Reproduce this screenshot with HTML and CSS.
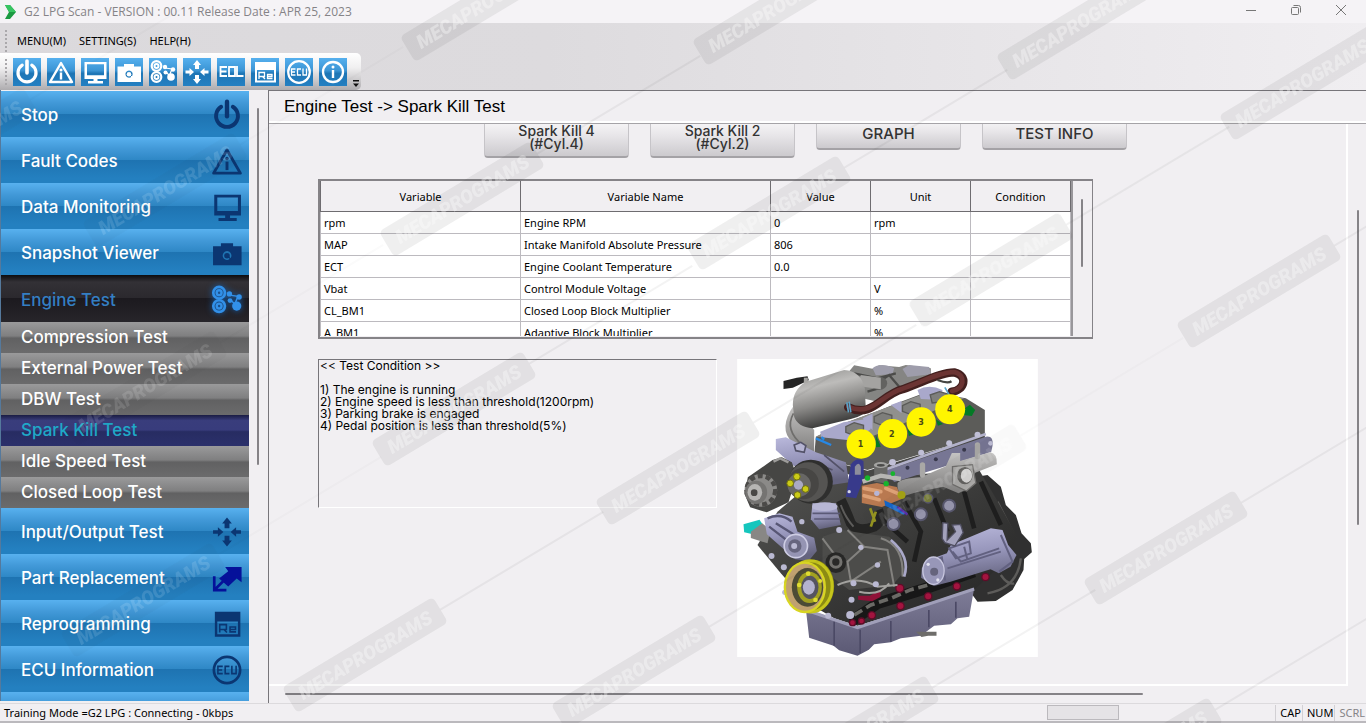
FILE: index.html
```html
<!DOCTYPE html>
<html lang="en">
<head>
<meta charset="utf-8">
<title>G2 LPG Scan</title>
<link rel="stylesheet" href="styles.css">
</head>
<body>
<svg class="sprite" aria-hidden="true">
  <symbol id="i-power" viewBox="0 0 28 28"><path d="M9.2 7.2A9 9 0 1 0 18.8 7.2" fill="none" stroke="currentColor" stroke-width="3.2" stroke-linecap="round"/><path d="M14 3v12" stroke="currentColor" stroke-width="3.6" stroke-linecap="round"/></symbol>
  <symbol id="i-warn" viewBox="0 0 28 28"><path d="M14 5 25 24H3Z" fill="none" stroke="currentColor" stroke-width="2.4" stroke-linejoin="round"/><circle cx="14" cy="12" r="1.500" fill="currentColor"/><path d="M12.800 14.500h2.400v7h-2.400z" fill="currentColor"/></symbol>
  <symbol id="i-monitor" viewBox="0 0 28 28"><path fill-rule="evenodd" d="M3.500 4h22v17h-9v2h5.500v2.500H7V23h5.500v-2h-9zM6 6.200h17v11H6z" fill="currentColor"/></symbol>
  <symbol id="i-camera" viewBox="0 0 28 28"><path fill-rule="evenodd" d="M2.500 8.500H9V6h10v2.500h7v15.500H2.500zM14 12.500a3.600 3.600 0 1 0 .1 0z" fill="currentColor"/><circle cx="14" cy="16.200" r="2.300" fill="currentColor"/><path d="m15 17 3 3" stroke="currentColor"/></symbol>
  <symbol id="i-engine" viewBox="0 0 28 28"><g fill="none" stroke="currentColor"><circle cx="7.500" cy="8" r="4.800" stroke-width="2.200"/><circle cx="7.500" cy="8" r="2" stroke-width="2"/><circle cx="7.500" cy="19" r="4.800" stroke-width="2.200"/><circle cx="7.500" cy="19" r="2" stroke-width="2"/><path d="m16 10 7 1-2 5M17 14l4 4" stroke-width="1.200"/></g><g fill="currentColor"><circle cx="16" cy="9" r="2.200"/><circle cx="16.500" cy="14.500" r="2"/><circle cx="24" cy="11.500" r="2.200"/><circle cx="22" cy="19" r="3.800"/></g></symbol>
  <symbol id="i-move" viewBox="0 0 28 28"><path fill="currentColor" d="m14 2 4 5H16v4h-4V7h-2zM14 26l4-5H16v-4h-4v4h-2zM11 14l-4.500-4v2.500h-4v3h4V18zM17 14l4.500-4v2.500h4v3h-4V18z"/></symbol>
  <symbol id="i-eol" viewBox="0 0 28 28"><path fill="none" stroke="currentColor" stroke-width="1.800" d="M10 9H3.500v9H10M4 13.500h5.500M12 9h6v9h-6zM20 8v10h6.500"/></symbol>
  <symbol id="i-re" viewBox="0 0 28 28"><path fill-rule="evenodd" d="M4 4h21v20.500H4zM6 12h17v10.500H6z" fill="currentColor"/><path fill="none" stroke="currentColor" stroke-width="1.300" d="M8 21v-6.500h5.500v4H8m3.500 0L14 21M16.500 18.500H21v-2h-4.500V20.500H21.500"/></symbol>
  <symbol id="i-ecu" viewBox="0 0 28 28"><circle cx="14" cy="14" r="10.800" fill="none" stroke="currentColor" stroke-width="2.200"/><path fill="none" stroke="currentColor" stroke-width="1.300" d="M10.500 11H6.500v6h4M7 14h3M16 11h-3.500v6H16M18 10.500V17h3.500v-6.500"/></symbol>
  <symbol id="i-info" viewBox="0 0 28 28"><circle cx="14" cy="14" r="10" fill="none" stroke="currentColor" stroke-width="2.300"/><circle cx="14" cy="9" r="1.500" fill="currentColor"/><path d="M12.800 12h2.400v8h-2.400z" fill="currentColor"/></symbol>
  <symbol id="i-swap" viewBox="0 0 28 28"><path fill="currentColor" d="M12.500 5H26v12.500l-4-3-7 6.500-7.500-6.500 7.500-6z"/><path fill="none" stroke="currentColor" stroke-width="2.200" d="M3.500 12.500V24H13.500M4 23.500l9-9"/></symbol>
</svg>

<header class="titlebar">
  <svg class="logo" viewBox="0 0 12 16" aria-hidden="true"><path d="M1 1h5l6 7-6 7H1l4-7z" fill="#1c9a42"/><path d="M1 1h5l6 7H5z" fill="#37c462"/></svg>
  <h1 class="title">G2 LPG Scan - VERSION : 00.11 Release Date : APR 25, 2023</h1>
  <div class="window-buttons">
    <button type="button" aria-label="Minimize"><svg viewBox="0 0 12 12"><path d="M1 6.500h10"/></svg></button>
    <button type="button" aria-label="Restore"><svg viewBox="0 0 12 12"><rect x="1.500" y="3.500" width="7" height="7" rx="1"/><path d="M3.500 1.500h5a2 2 0 0 1 2 2v5"/></svg></button>
    <button type="button" aria-label="Close"><svg viewBox="0 0 12 12"><path d="m1 1 10 10M11 1 1 11"/></svg></button>
  </div>
</header>

<div class="bars">
  <div class="menubar">
    <span class="grip"></span>
    <button type="button">MENU(M)</button>
    <button type="button">SETTING(S)</button>
    <button type="button">HELP(H)</button>
  </div>
  <div class="toolbar">
    <span class="grip"></span>
    <button type="button" aria-label="Stop"><svg><use href="#i-power"/></svg></button>
    <button type="button" aria-label="Fault codes"><svg><use href="#i-warn"/></svg></button>
    <button type="button" aria-label="Data monitoring"><svg><use href="#i-monitor"/></svg></button>
    <button type="button" aria-label="Snapshot viewer"><svg><use href="#i-camera"/></svg></button>
    <button type="button" aria-label="Engine test"><svg><use href="#i-engine"/></svg></button>
    <button type="button" aria-label="Input/output test"><svg><use href="#i-move"/></svg></button>
    <button type="button" aria-label="End of line"><svg><use href="#i-eol"/></svg></button>
    <button type="button" aria-label="Reprogramming"><svg><use href="#i-re"/></svg></button>
    <button type="button" aria-label="ECU information"><svg><use href="#i-ecu"/></svg></button>
    <button type="button" aria-label="About"><svg><use href="#i-info"/></svg></button>
    <button type="button" class="more" aria-label="More"><svg viewBox="0 0 6 7"><path d="M0 0h6v1.500H0zM0 3.500h6L3 7z"/></svg></button>
  </div>
</div>

<div class="main">
  <div class="sidebar">
    <nav class="menu">
      <a class="item" href="#">Stop<svg><use href="#i-power"/></svg></a>
      <a class="item" href="#">Fault Codes<svg><use href="#i-warn"/></svg></a>
      <a class="item" href="#">Data Monitoring<svg><use href="#i-monitor"/></svg></a>
      <a class="item" href="#">Snapshot Viewer<svg><use href="#i-camera"/></svg></a>
      <a class="item open" href="#">Engine Test<svg><use href="#i-engine"/></svg></a>
      <a class="sub" href="#">Compression Test</a>
      <a class="sub" href="#">External Power Test</a>
      <a class="sub" href="#">DBW Test</a>
      <a class="sub current" href="#">Spark Kill Test</a>
      <a class="sub" href="#">Idle Speed Test</a>
      <a class="sub" href="#">Closed Loop Test</a>
      <a class="item" href="#">Input/Output Test<svg><use href="#i-move"/></svg></a>
      <a class="item" href="#">Part Replacement<svg class="blue"><use href="#i-swap"/></svg></a>
      <a class="item" href="#">Reprogramming<svg><use href="#i-re"/></svg></a>
      <a class="item" href="#">ECU Information<svg><use href="#i-ecu"/></svg></a>
      <a class="item" href="#" aria-label="More"></a>
    </nav>
    <span class="thumb side-thumb"></span>
  </div>

  <section class="content">
    <h2 class="crumb">Engine Test -&gt; Spark Kill Test</h2>
    <div class="viewer">
      <div class="page">
        <div class="actions">
          <button type="button" class="tall first">Spark Kill 4<br>(#Cyl.4)</button>
          <button type="button" class="tall">Spark Kill 2<br>(#Cyl.2)</button>
          <button type="button">GRAPH</button>
          <button type="button">TEST INFO</button>
        </div>
        <div class="grid-box">
          <div class="grid-scroll">
            <table>
              <colgroup><col class="c-var"><col class="c-name"><col class="c-s"><col class="c-s"><col class="c-s"></colgroup>
              <thead><tr><th>Variable</th><th>Variable Name</th><th>Value</th><th>Unit</th><th>Condition</th></tr></thead>
              <tbody>
                <tr><td>rpm</td><td>Engine RPM</td><td>0</td><td>rpm</td><td></td></tr>
                <tr><td>MAP</td><td>Intake Manifold Absolute Pressure</td><td>806</td><td></td><td></td></tr>
                <tr><td>ECT</td><td>Engine Coolant Temperature</td><td>0.0</td><td></td><td></td></tr>
                <tr><td>Vbat</td><td>Control Module Voltage</td><td></td><td>V</td><td></td></tr>
                <tr><td>CL_BM1</td><td>Closed Loop Block Multiplier</td><td></td><td>%</td><td></td></tr>
                <tr><td>A_BM1</td><td>Adaptive Block Multiplier</td><td></td><td>%</td><td></td></tr>
              </tbody>
            </table>
          </div>
          <span class="thumb grid-thumb"></span>
        </div>
        <div class="lower">
          <div class="condition">
            <p>&lt;&lt; Test Condition &gt;&gt;</p>
            <p>1) The engine is running<br>2) Engine speed is less than threshold(1200rpm)<br>3) Parking brake is engaged<br>4) Pedal position is less than threshold(5%)</p>
          </div>
          <svg class="engine" viewBox="9 12 902 894" role="img" aria-label="Engine with cylinders 1 to 4 marked">
            <defs>
              <linearGradient id="tank" x1="0" y1="0" x2=".3" y2="1"><stop offset="0" stop-color="#8d8d8b"/><stop offset=".35" stop-color="#bdbcba"/><stop offset=".65" stop-color="#8a8987"/><stop offset="1" stop-color="#3c3c3b"/></linearGradient>
              <linearGradient id="block" x1="0" y1="0" x2="1" y2="1"><stop offset="0" stop-color="#555553"/><stop offset=".5" stop-color="#3a3a39"/><stop offset="1" stop-color="#232323"/></linearGradient>
              <linearGradient id="pan" x1="0" y1="0" x2="0" y2="1"><stop offset="0" stop-color="#7f7d98"/><stop offset="1" stop-color="#5b5974"/></linearGradient>
              <linearGradient id="metal" x1="0" y1="0" x2="0" y2="1"><stop offset="0" stop-color="#c5c4c3"/><stop offset="1" stop-color="#7d7c7b"/></linearGradient>
              <linearGradient id="lav" x1="0" y1="0" x2=".2" y2="1"><stop offset="0" stop-color="#bab9dc"/><stop offset=".5" stop-color="#9796bb"/><stop offset="1" stop-color="#65647f"/></linearGradient>
            </defs>
            <rect x="9" y="12" width="902" height="894" fill="#fff"/>
            <!-- flywheel housing -->
            <path d="M700 370 760 360 800 395 815 450 845 480 862 535 890 565 893 592 870 612 868 645 835 705 785 738 730 740 700 700Z" fill="#303030"/>
            <path d="M860 610Q850 700 760 715M790 440 845 550M800 660q20 30 40 25" fill="none" stroke="#5d5c5a" stroke-width="7"/>
            <!-- crankcase -->
            <path d="M235 380 735 345 785 430 850 545 810 620 720 705 370 812 300 790 215 740 140 655 70 570 130 470Z" fill="url(#block)"/>
            <path d="M510 440 560 530 540 620M600 430 640 530M690 410 720 520M740 380 800 510M430 480 520 560" fill="none" stroke="#1e1e1e" stroke-width="14"/>
            <g fill="#9594ab" stroke="#57566c" stroke-width="6"><circle cx="478" cy="507" r="18"/><circle cx="560" cy="478" r="18"/><circle cx="645" cy="452" r="18"/><circle cx="582" cy="430" r="13"/></g>
            <!-- oil pan -->
            <path d="M215 762 225 848 298 872 315 886 370 902 404 884 420 868 470 862 500 850 560 842 600 812 650 808 670 790 705 785 720 700 370 814Z" fill="url(#pan)"/>
            <path d="M215 765 370 818 720 702" fill="none" stroke="#a09fb9" stroke-width="9"/>
            <path d="M300 800v72M378 824v70M470 798v62M584 765v52M665 740v48" stroke="#4b4965" stroke-width="5"/>
            <path d="M545 830h62v12h-25l-20 4z" fill="#6e6d6a"/>
            <!-- sump rail -->
            <path d="M350 800 430 745 560 705 720 650" fill="none" stroke="#171717" stroke-width="34"/>
            <path d="m360 780 50-30 60-20 60-26 60-16 60-34 60-10" fill="none" stroke="#6b6a66" stroke-width="11" stroke-dasharray="28 14"/>
            <path d="m372 722 35 0 32-18v22l-25 13-42-5z" fill="#8f1238"/>
            <g fill="#a3143f" stroke="#5d0d28" stroke-width="4"><circle cx="382" cy="798" r="9"/><circle cx="355" cy="803" r="9"/><circle cx="413" cy="781" r="11"/><circle cx="499" cy="753" r="11"/><circle cx="497" cy="700" r="12"/><circle cx="582" cy="724" r="11"/><circle cx="668" cy="694" r="11"/><circle cx="754" cy="666" r="11"/></g>
            <!-- cylinder head -->
            <path d="M245 245 330 205 425 170 500 140 580 110 695 130 752 165V240L400 345 240 305Z" fill="#5c5c59"/>
            <path d="M245 245 330 205 560 120 690 130 400 250Z" fill="#90908d"/>
            <path d="m258 230 70-28 70-10 12 30-50 35-98-10zM385 190l30-14v50M470 150l32-12v36M550 105q35-20 75 0l-5 30-60-3z" fill="#a9a8cb"/>
            <g fill="#7e7e7b" stroke="#5b5b58" stroke-width="4"><path d="m335 215 25-12 28 8v25l-28 6-25-10zM420 185l25-12 28 8v25l-28 6-25-10zM505 152l25-12 28 8v25l-28 6-25-10zM588 120l28-10 28 8v20l-50 6z"/></g>
            <path d="m240 305 160 42 352-106v22L400 375l-160-48z" fill="#484846"/>
            <path d="m445 350 310-105q24-4 20 28l-4 18-290 90z" fill="#777694"/>
            <path d="m450 345 305-108" stroke="#b2b1ca" stroke-width="8"/>
            <g fill="#c0bfd6"><circle cx="475" cy="322" r="10"/><circle cx="561" cy="293" r="9"/><circle cx="645" cy="265" r="9"/><circle cx="730" cy="239" r="9"/><circle cx="769" cy="265" r="7"/></g>
            <g fill="#38384b"><circle cx="520" cy="338" r="6"/><circle cx="605" cy="313" r="6"/><circle cx="690" cy="284" r="6"/></g>
            <!-- exhaust manifold -->
            <path d="M490 385q10-15 70-18l75-33 18-40 25 0 0 24 90-26q22 4 20 36l-65 25-10 42-40 20-46-20-80 17-35 10q-25-5-22-37Z" fill="url(#metal)"/>
            <path d="m655 335 60-6 10 55-28 24-42-20z" fill="#a9a8a6" stroke="#6f6e6c" stroke-width="4"/><ellipse cx="692" cy="362" rx="23" ry="26" fill="#62615f"/><ellipse cx="697" cy="362" rx="17" ry="21" fill="#d5d4d3"/>
            <path d="M730 270v35M565 330v30" stroke="#a9a8a6" stroke-width="16" stroke-linecap="round"/>
            <path d="M420 330v50l40 6v-55z" fill="#686866"/><ellipse cx="440" cy="330" rx="21" ry="9" fill="#a3a3a1"/><ellipse cx="440" cy="331" rx="12" ry="4" fill="#4b4b4a"/>
            <!-- intake top parts -->
            <path d="m340 55 20-24 55 10 20-10 60 5 20-6 75 10 0 30-60 20-40 30-60 20-45-10z" fill="#858583"/>
            <path d="M415 40q25-20 65 0l-5 18-50 3zM505 42l20-12 60 6 5 22-70 8z" fill="#9e9dab"/>
            <path d="m360 55 70 15 55-15M420 90l45-30 30 35M400 110l50-15" fill="none" stroke="#4b4b49" stroke-width="7"/>
            <ellipse cx="435" cy="85" rx="24" ry="20" fill="#626260"/><path d="m380 60 60 8v35l-70-10z" fill="#a4a3a1"/>
            <!-- intake pipe and canister -->
            <path d="M180 150Q130 220 175 262L240 300 240 225Z" fill="url(#metal)"/>
            <path d="M178 175Q150 225 205 270" fill="none" stroke="#6f6e6c" stroke-width="5"/>
            <path d="M176 150Q175 105 215 80L330 45Q380 48 392 100L395 165Q392 182 350 192L235 220Q190 215 180 185Z" fill="url(#tank)"/>
            <path d="m148 78 40-10 32-4 4 12-48 22-28 4z" fill="#252525"/>
            <path d="M215 68v15" stroke="#a8a7a4" stroke-width="12"/>
            <!-- hose -->
            <path d="M342 157C415 190 440 120 505 103C570 80 620 52 660 52C705 62 690 108 652 110" fill="none" stroke="#43201f" stroke-width="25" stroke-linecap="round"/>
            <path d="M342 155C415 187 440 118 505 101C570 78 620 51 660 51C700 61 688 104 654 108" fill="none" stroke="#6b3433" stroke-width="14" stroke-linecap="round"/>
            <path d="m345 140 5 32M338 142l5 30M632 97l14 24" stroke="#5aa4c9" stroke-width="5"/>
            <path d="M610 75q30 12 42 4" fill="none" stroke="#454543" stroke-width="7"/>
            <path d="m245 250 46 20M262 246l8 8" stroke="#2788e4" stroke-width="7"/>
            <path d="M425 240 440 275 425 277M520 220l20 18-16 5M605 193l22 14-16 5M685 165l22-16 16 16-10 18-26-3z" fill="#047a25"/>
            <!-- left bracket and alternator -->
            <path d="m125 252 30-5 90 45 90 30 10 60-70 10-100-62-50-45z" fill="url(#lav)"/>
            <path d="m180 270 20-8 15 10-5 20-25-5zM235 320l60 25M270 300l60 50" fill="#b5b4d2" stroke="#535268" stroke-width="5"/>
            <path d="m115 315 28-8 30 15 15 40-25 80-65 30-50-15-17-40 10-50 40-28z" fill="#464644"/>
            <path d="m118 320 20-10 25 12" fill="none" stroke="#9d9c9a" stroke-width="7"/>
            <circle cx="80" cy="406" r="49" fill="#8b8a88"/><circle cx="80" cy="406" r="43" fill="none" stroke="#4b4a48" stroke-width="13" stroke-dasharray="15 9"/>
            <ellipse cx="66" cy="412" rx="33" ry="35" fill="#757472"/><ellipse cx="62" cy="412" rx="22" ry="25" fill="#b6b5b3"/><circle cx="60" cy="413" r="10" fill="#494846"/>
            <circle cx="230" cy="380" r="66" fill="#2f2f2e"/><circle cx="222" cy="381" r="59" fill="#555452"/><circle cx="207" cy="386" r="47" fill="#474644"/><circle cx="195" cy="390" r="35" fill="#686765"/>
            <circle cx="193" cy="390" r="14" fill="#aaa9c3"/>
            <g fill="#cbcb18" stroke="#74740d" stroke-width="3"><circle cx="188" cy="365" r="10"/><circle cx="168" cy="385" r="10"/><circle cx="190" cy="420" r="10"/><circle cx="214" cy="402" r="10"/></g>
            <path d="m335 425 15-97q20-25 38-9l1 50-23 61z" fill="#383a8b"/><path d="M362 335q12-17 18 0v24h-18z" fill="#8d8d9c"/><circle cx="345" cy="410" r="5" fill="#d5d5e6"/>
            <!-- injector block -->
            <path d="m383 392 45-8 60 12 15 36-60 24-60-12z" fill="#b97950"/>
            <path d="m390 400 50 10M390 422l45 12M455 400l35 15" stroke="#dda176" stroke-width="11" stroke-linecap="round"/>
            <path d="m450 436 40 18 30 20-12 5-55-27z" fill="#1566c9"/><path d="m490 456 30 23" stroke="#5a2fa7" stroke-width="7"/>
            <circle cx="428" cy="415" r="8" fill="#b6b5d6"/><circle cx="502" cy="420" r="12" fill="#a6a514"/><circle cx="581" cy="430" r="12" fill="#777d3a"/>
            <path d="m385 380 55-18 60 10" fill="none" stroke="#b7b6b3" stroke-width="13"/>
            <g fill="#16b52c"><circle cx="400" cy="369" r="8"/><circle cx="456" cy="386" r="8"/><circle cx="476" cy="356" r="7"/></g>
            <!-- water pump and belt side -->
            <path d="m235 445 70 0 15 65-65 13-25-30z" fill="url(#lav)"/><ellipse cx="272" cy="455" rx="38" ry="13" fill="#b8b7d5"/><path d="M235 475h82M240 492h78" stroke="#5b5a77" stroke-width="5"/>
            <path d="M320 435q15 30 30 70 20 30 70 10 25-15 12-50" fill="none" stroke="#252524" stroke-width="30"/>
            <path d="M320 450q12 35 38 65" fill="none" stroke="#5d5c5a" stroke-width="6"/>
            <path d="m408 460 15 40M425 470l-15 45" stroke="#989721" stroke-width="8"/>
            <path d="m28 508 48-14 8 12-28 32-26-6z" fill="#15c6bd"/>
            <path d="m50 530 34-25 25 20-9 40-50-16z" fill="#888785"/>
            <path d="m90 490 45-15 40 10 15 45 50 18 8 40-25 30-40-5-85-75z" fill="url(#lav)"/>
            <path d="m105 515 65 50M125 505l65 40M100 490q40-18 72 10" fill="none" stroke="#575674" stroke-width="7"/>
            <circle cx="185" cy="573" r="35" fill="#9594b3" stroke="#cecde4" stroke-width="5"/><circle cx="182" cy="573" r="20" fill="#66657e"/><circle cx="180" cy="573" r="9" fill="#bbbad3"/>
            <!-- timing cover -->
            <path d="m265 545 60-20 60 10 80 10 40 40 10 60-40 45-130 15-80-60z" fill="#4c4c4a"/>
            <path d="m265 550 45 60M340 525l50 50-50 45 10 60 90-60M390 575l70 10 20 110M440 550q70 20 65 115" fill="none" stroke="#83827f" stroke-width="6"/>
            <path d="M470 555q60 50 40 110" fill="none" stroke="#aaa9c9" stroke-width="8"/>
            <circle cx="305" cy="623" r="31" fill="#272726"/><circle cx="305" cy="621" r="20" fill="#73726f"/><circle cx="305" cy="621" r="11" fill="#292928"/>
            <path d="M310 690q60-30 120 5l60-5M375 710q60 15 90-25" fill="none" stroke="#a3a29f" stroke-width="6"/>
            <g fill="#bab9d2"><circle cx="112" cy="603" r="9"/><circle cx="149" cy="637" r="9"/><circle cx="380" cy="577" r="8"/><circle cx="430" cy="630" r="8"/><circle cx="358" cy="685" r="9"/><circle cx="425" cy="688" r="9"/><circle cx="352" cy="734" r="9"/><circle cx="348" cy="780" r="12"/><circle cx="282" cy="782" r="9"/><circle cx="152" cy="712" r="8"/><circle cx="203" cy="500" r="8"/><circle cx="315" cy="525" r="9"/></g>
            <!-- crank pulley -->
            <ellipse cx="238" cy="693" rx="62" ry="79" fill="#8c8b13"/><ellipse cx="228" cy="694" rx="66" ry="77" fill="none" stroke="#c6c51c" stroke-width="9"/><ellipse cx="212" cy="697" rx="60" ry="74" fill="#c0a170" stroke="#d8d522" stroke-width="7"/>
            <ellipse cx="220" cy="697" rx="47" ry="58" fill="#4c4b35"/><ellipse cx="226" cy="697" rx="37" ry="47" fill="#a2a021"/><ellipse cx="227" cy="697" rx="26" ry="35" fill="#555460"/><ellipse cx="224" cy="697" rx="18" ry="22" fill="#b4b3ce"/>
            <g fill="#dfdd31"><circle cx="222" cy="656" r="7"/><circle cx="195" cy="690" r="7"/><circle cx="244" cy="735" r="7"/><circle cx="258" cy="678" r="6"/></g>
            <!-- starter motor -->
            <path d="m563 640 20-25 55-20 12-25 120-50 35 5 17 45 25 30-18 35-35 20-25-12-120 37-50 13-38-25z" fill="url(#lav)"/>
            <path d="m583 622 40-15 10 70M655 590l25 30 115-40M640 640l160-50M690 575l10 40M645 580l60-20 5 35-45 15zM800 540l35 80-40 30" fill="none" stroke="#626180" stroke-width="6"/>
            <ellipse cx="598" cy="647" rx="32" ry="41" fill="#9897b8" stroke="#c7c6df" stroke-width="4"/><circle cx="600" cy="650" r="12" fill="#65647c"/><circle cx="582" cy="628" r="5" fill="#e0e0ed"/><circle cx="611" cy="675" r="5" fill="#e0e0ed"/>
            <path d="m626 503 15 2-2 50 25-25-10-20 25-2 8 25-25 40-30-10-8-12z" fill="#a3a2bc" stroke="#4f4e60" stroke-width="4"/>
            <!-- cylinder markers -->
            <g class="markers"><circle cx="381" cy="267" r="44"/><circle cx="475" cy="236" r="44"/><circle cx="561" cy="201" r="44"/><circle cx="648" cy="163" r="45"/></g>
            <g class="marker-labels"><text x="379" y="275">1</text><text x="473" y="245">2</text><text x="561" y="209">3</text><text x="647" y="171">4</text></g>
          </svg>
        </div>
      </div>
      <span class="thumb v-thumb"></span>
      <span class="thumb h-thumb"></span>
    </div>
  </section>
</div>

<footer class="status">
  <span class="status-text">Training Mode =G2 LPG : Connecting - 0kbps</span>
  <span class="status-box"></span>
  <span class="key">CAP</span><span class="key">NUM</span><span class="key off">SCRL</span>
</footer>

<svg class="watermark" aria-hidden="true">
  <defs><g id="wm"><rect x="-88" y="-15" width="176" height="30" rx="5" class="wm-plate"/><text y="7" class="wm-text">MECAPROGRAMS</text><path d="M88 0h190" class="wm-line"/></g></defs>
  <g class="faint">
    <use href="#wm" transform="translate(-45 145) rotate(-31)"/><use href="#wm" transform="translate(165 190) rotate(-31)"/><use href="#wm" transform="translate(145 388) rotate(-31)"/><use href="#wm" transform="translate(143 600) rotate(-31)"/><use href="#wm" transform="translate(945 481) rotate(-31)"/>
  </g>
  <g>
    <use href="#wm" transform="translate(483 4) rotate(-31)"/><use href="#wm" transform="translate(775 8) rotate(-31)"/><use href="#wm" transform="translate(1079 23) rotate(-31)"/>
    <use href="#wm" transform="translate(462 199) rotate(-31)"/><use href="#wm" transform="translate(769 213) rotate(-31)"/><use href="#wm" transform="translate(991 270) rotate(-31)"/><use href="#wm" transform="translate(1302 83) rotate(-31)"/>
    <use href="#wm" transform="translate(454 409) rotate(-31)"/><use href="#wm" transform="translate(678 468) rotate(-31)"/><use href="#wm" transform="translate(1259 291) rotate(-31)"/>
    <use href="#wm" transform="translate(365 655) rotate(-31)"/><use href="#wm" transform="translate(634 672) rotate(-31)"/><use href="#wm" transform="translate(857 733) rotate(-31)"/><use href="#wm" transform="translate(1166 548) rotate(-31)"/><use href="#wm" transform="translate(1140 755) rotate(-31)"/>
  </g>
</svg>
</body>
</html>
```
FILE: styles.css
```css
* { box-sizing: border-box; }
body {
  margin: 0;
  height: 100vh;
  display: flex;
  flex-direction: column;
  overflow: hidden;
  position: relative;
  background: #f1eff2;
  color: #000;
  font: 12px/16px "Noto Sans", "Open Sans", sans-serif;
}
button { font: inherit; color: inherit; border: 0; padding: 0; background: none; }
a { color: inherit; text-decoration: none; }
h1, h2, p { margin: 0; font-weight: 400; }
.sprite { position: absolute; width: 0; height: 0; }

/* title bar */
.titlebar { display: flex; align-items: center; flex: none; height: 23px; padding: 0 3px; background: #f5f3f6; }
.logo { width: 14px; height: 16px; }
.title { margin-left: 7px; font: 12px/16px "Open Sans", "Noto Sans", sans-serif; color: #858387; }
.window-buttons { display: flex; margin-left: auto; padding-bottom: 3px; }
.window-buttons button { width: 45px; height: 20px; display: grid; place-items: center; }
.window-buttons svg { width: 12px; height: 12px; fill: none; stroke: #777; }

/* menu and tool bars */
.bars { flex: none; background: linear-gradient(90deg, #dbd9dc, #dddbde 40%, #f0eef1); }
.menubar { display: flex; align-items: center; gap: 13px; height: 30px; padding: 5px 5px 0; font-size: 11px; }
.grip { width: 2px; height: 22px; background: repeating-linear-gradient(#aaa8ab 0 2px, transparent 2px 4px); }
.menubar .grip { margin-right: -3px; }
.toolbar { display: flex; align-items: center; gap: 6px; width: 361px; height: 37px; padding: 1px 2px 0 5px; background: linear-gradient(#fff, #f0eff0 40%, #aeacaf); border-radius: 0 5px 5px 0; }
.toolbar .grip { height: 26px; }
.toolbar button { width: 28px; height: 28px; color: #fff; background: linear-gradient(#56b0ee, #3a94d4 45%, #1e76b6 55%, #2480c2); }
.toolbar svg { display: block; width: 28px; height: 28px; }
.toolbar .more { width: 6px; height: 8px; margin: 22px 0 0 auto; background: none; }
.toolbar .more svg { width: 6px; height: 7px; fill: #111; }

/* sidebar */
.main { flex: 1; min-height: 0; display: flex; }
.sidebar { flex: none; width: 268px; display: flex; gap: 8px; padding-bottom: 2px; }
.menu { width: 249px; padding-top: 1px; overflow: hidden; border-left: 1px solid #55799c; color: #fff; font: 500 17px/20px Inter, "Liberation Sans", sans-serif; }
.item { display: flex; align-items: center; justify-content: space-between; height: 46px; padding: 2px 5px 0 20px; background: linear-gradient(#58b1ef, #4299d8 25%, #2f88c6 49%, #1e73b1 50%, #2480c0 90%); }
.item svg { width: 34px; height: 34px; color: #0b3672; }
.item .blue { color: #05119a; }
.open { height: 47px; color: #347fc3; background: linear-gradient(#0d0d10, #333136 15%, #2b292e 49%, #1c1a1f 50%, #27252a); }
.open svg { color: #3290e8; filter: drop-shadow(0 0 3px #1762b2); }
.sub { display: block; height: 31px; padding: 5px 0 0 20px; background: linear-gradient(#9a9a9b, #7f7f80 45%, #616162 52%, #6b6b6c); }
.current { color: #1fa9c8; background: linear-gradient(#1a1c43, #393d7c 18%, #383c7c 48%, #272c62 54%, #2b306b); }
.thumb { background: #858387; border-radius: 1px; }
.side-thumb { width: 2px; height: 357px; margin-top: 18px; }

/* content */
.content { flex: 1; min-width: 0; display: flex; flex-direction: column; border: solid #77757a; border-width: 1px 0 0 1px; }
.crumb { flex: none; height: 32px; padding: 7px 15px 0; border-bottom: 2px solid #fff; font: 17px/18px "Liberation Sans", sans-serif; }
.viewer { flex: 1; min-height: 0; display: grid; grid-template: 1fr 17px / 1fr 18px; border-top: 1px solid #a5a3a7; }
.page { min-width: 0; overflow: hidden; padding-left: 49px; border: solid #fff; border-width: 0 2px 2px 0; }
.actions { display: grid; grid-template-columns: repeat(5, 145px); gap: 21px; align-items: start; height: 62px; margin-top: -7px; }
.actions button { height: 33px; border-radius: 4px; border: 1px solid #c6c4c8; border-bottom: 2px solid #a4a2a6; background: linear-gradient(#fbfafb, #e8e6e9 45%, #cccace); color: #333; font: 500 15px/13px Inter, "Liberation Sans", sans-serif; }
.actions .tall { height: 41px; font-size: 14px; }
.actions .first { grid-column: 2; }
.grid-box { display: flex; width: 775px; max-width: 100%; height: 160px; border: 2px solid #858387; border-right-width: 1px; }
.grid-scroll { width: 753px; height: 155px; overflow: hidden; border-right: 2px solid #99979b; }
.grid-thumb { width: 2px; height: 68px; margin: 18px 0 0 8px; }
table { width: 751px; table-layout: fixed; border-collapse: collapse; background: #fff; font-size: 11px; line-height: 16px; }
.c-var { width: 200px; }
.c-name { width: 250px; }
.c-s { width: 100px; }
th { height: 30px; padding: 2px 0 0; border: 1px solid #6e6c70; border-width: 0 1px 1px; background: #f1eff2; font-weight: 400; }
td { height: 22px; padding: 3px 3px 2px; border: 1px solid #bcbabf; }
.lower { display: flex; align-items: flex-start; gap: 20px; margin-top: 20px; }
.condition { width: 399px; height: 149px; padding-left: 1px; border: 1px solid; border-color: #77757a #fff #fff #77757a; font: 12px/12px Inter, "Liberation Sans", sans-serif; }
.condition p + p { margin-top: 12px; }
.engine { width: 301px; height: 298px; }
.markers { fill: #fff500; }
.marker-labels { font: bold 24px "DejaVu Sans", sans-serif; text-anchor: middle; fill: #4b4a16; }
.v-thumb { width: 2px; height: 315px; margin: 86px 0 0 9px; }
.h-thumb { width: 858px; max-width: 100%; height: 2px; margin: 7px 0 0 16px; }

/* status bar */
.status { flex: none; display: flex; align-items: center; height: 20px; padding-left: 4px; border-top: 1px solid #dcdadd; border-bottom: 2px solid #bbb9bd; font-size: 11px; }
.status-box { width: 72px; height: 15px; margin-left: auto; margin-right: 156px; border: 1px solid #bbb9bd; background: #e5e3e6; }
.key { padding: 0 1px 0 4px; border-left: 1px solid #d2d0d4; }
.off { color: #858387; }

/* watermark */
.watermark { position: absolute; inset: 0; width: 100%; height: 100%; pointer-events: none; }
.wm-plate { fill: #333; fill-opacity: .08; }
.wm-text { font: italic 900 19px Roboto, "Liberation Sans", sans-serif; text-anchor: middle; fill: #fff; fill-opacity: .35; }
.wm-line { stroke: #333; stroke-opacity: .06; stroke-width: 2; }
.faint { opacity: .35; }
```
